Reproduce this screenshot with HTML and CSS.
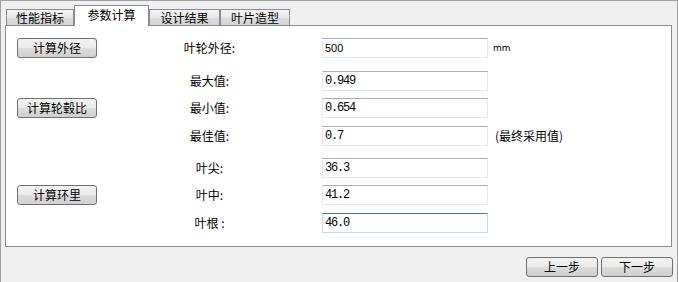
FILE: index.html
```html
<!DOCTYPE html>
<html lang="zh-CN">
<head>
    <meta charset="UTF-8">
    <title>参数计算</title>
    <link rel="stylesheet" href="styles.css">
</head>
<body>
    <div class="window">
        <div class="tabs">
            <div class="tab tab_w1">性能指标</div>
            <div class="tab tab_active">参数计算</div>
            <div class="tab tab_w3">设计结果</div>
            <div class="tab tab_w4">叶片造型</div>
        </div>

        <div class="panel">
            <div class="row">
                <button type="button" class="btn">计算外径</button>
                <span class="label">叶轮外径:</span>
                <input class="field field_sans" type="text" value="500">
                <span class="unit">mm</span>
            </div>
            <div class="row row_gap13">
                <span></span>
                <span class="label">最大值:</span>
                <input class="field" type="text" value="0.949">
            </div>
            <div class="row row_gap7">
                <button type="button" class="btn">计算轮毂比</button>
                <span class="label">最小值:</span>
                <input class="field" type="text" value="0.654">
            </div>
            <div class="row row_gap8">
                <span></span>
                <span class="label">最佳值:</span>
                <input class="field" type="text" value="0.7">
                <span class="note">(最终采用值)</span>
            </div>
            <div class="row row_gap12">
                <span></span>
                <span class="label">叶尖:</span>
                <input class="field" type="text" value="36.3">
            </div>
            <div class="row row_gap7">
                <button type="button" class="btn">计算环里</button>
                <span class="label">叶中:</span>
                <input class="field" type="text" value="41.2">
            </div>
            <div class="row row_gap8">
                <span></span>
                <span class="label">叶根 :</span>
                <input class="field field_focus" type="text" value="46.0">
            </div>
        </div>

        <div class="footer">
            <button type="button" class="btn btn_step">上一步</button>
            <button type="button" class="btn btn_step">下一步</button>
        </div>
    </div>
</body>
</html>
```

FILE: styles.css
```css
* {
    box-sizing: border-box;
}
body {
    margin: 0;
    background-color: #f0f0f0;
    font-family: "Noto Sans CJK SC", "Liberation Sans", sans-serif;
    font-size: 12px;
    color: #000;
}
.window {
    width: 678px;
    height: 282px;
    border: 1px solid #a0a0a0;
    border-bottom: none;
    padding: 4px 5px 0 4px;
    background-color: #f0f0f0;
}
.tabs {
    display: flex;
    align-items: flex-end;
    height: 21px;
    margin-left: 1px;
    margin-bottom: -1px;
    position: relative;
    z-index: 1;
}
.tab {
    height: 16px;
    margin-bottom: 1px;
    border: 1px solid #898c95;
    border-bottom: none;
    background: linear-gradient(#f4f4f4, #e8e8e8 50%, #dcdcdc 51%, #d4d4d4);
    display: flex;
    align-items: center;
    justify-content: center;
    line-height: 1;
    padding-top: 1px;
}
.tab_w1 {
    width: 68px;
}
.tab_active {
    width: 75px;
    height: 21px;
    margin-bottom: 0;
    background: #fff;
    padding-top: 0;
    padding-bottom: 3px;
}
.tab_w3 {
    width: 71px;
}
.tab_w4 {
    width: 70px;
}
.panel {
    height: 222px;
    width: 667px;
    background-color: #fff;
    border: 1px solid #898c95;
    padding: 12px 0 0 11px;
}
.row {
    display: grid;
    grid-template-columns: 80px 225px 166px auto;
    align-items: center;
    height: 20px;
}
.row_gap7 {
    margin-top: 7px;
}
.row_gap8 {
    margin-top: 8px;
}
.row_gap12 {
    margin-top: 12px;
}
.row_gap13 {
    margin-top: 13px;
}
.btn {
    height: 20px;
    padding: 0;
    border: 1px solid #707070;
    border-radius: 3px;
    background: linear-gradient(#f2f2f2, #ebebeb 50%, #dddddd 51%, #cfcfcf);
    font-family: "Noto Sans CJK SC", sans-serif;
    font-size: 12px;
    line-height: 1;
    color: #000;
}
.label {
    text-align: center;
    line-height: 1;
}
.field {
    width: 166px;
    height: 20px;
    border: 1px solid #e3e9ef;
    border-top-color: #abadb3;
    padding: 0 0 0 2px;
    font-family: "Liberation Mono", monospace;
    font-size: 12px;
    letter-spacing: -1.2px;
    color: #000;
    outline: none;
}
.field_sans {
    font-family: "Liberation Sans", sans-serif;
    font-size: 11px;
    letter-spacing: 0;
}
.field_focus {
    border-color: #c5dcec;
    border-top-color: #3d7bad;
}
.unit {
    margin-left: 5px;
    font-family: "DejaVu Sans", sans-serif;
    font-size: 9px;
    line-height: 1;
    color: #000;
}
.note {
    margin-left: 7px;
    line-height: 1;
}
.footer {
    display: flex;
    justify-content: flex-end;
    gap: 3px;
    margin-top: 10px;
    margin-right: -1px;
}
.btn_step {
    width: 72px;
}
```
